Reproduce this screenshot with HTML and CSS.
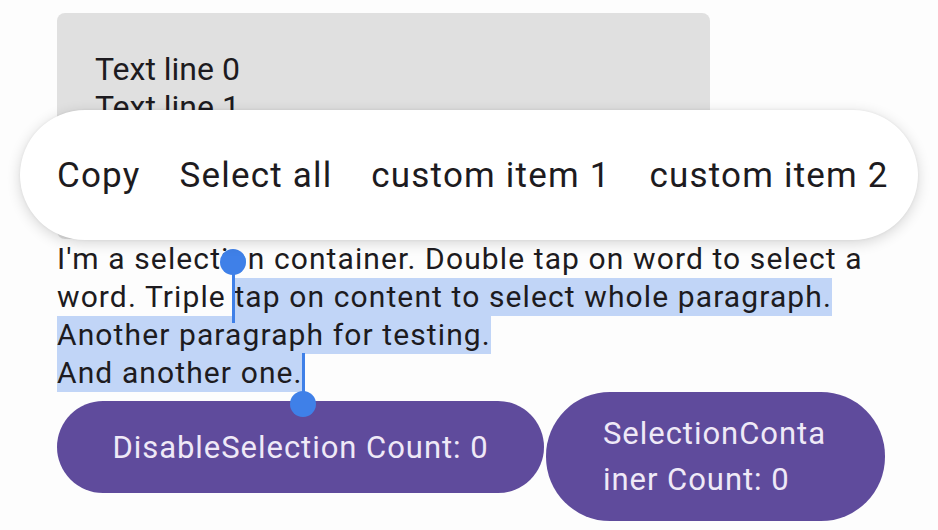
FILE: index.html
```html
<!DOCTYPE html>
<html>
<head>
<meta charset="utf-8">
<link rel="stylesheet" href="styles.css">
</head>
<body>
<div class="screen">
  <div class="card">
    <div class="card-line">Text line 0</div>
    <div class="card-line">Text line 1</div>
  </div>
  <div class="para">
    <div class="line">I'm a selection container. Double tap on word to select a</div>
    <div class="line">word. Triple <span class="sel">tap on content to select whole paragraph.</span></div>
    <div class="line"><span class="sel">Another paragraph for testing.</span></div>
    <div class="line"><span class="sel">And another one.</span></div>
    <div class="handle handle-start"><span class="knob"></span><span class="stem"></span></div>
    <div class="handle handle-end"><span class="stem"></span><span class="knob"></span></div>
  </div>
  <div class="buttons">
    <div class="btn btn-wide">DisableSelection Count: 0</div>
    <div class="btn btn-tall">SelectionConta<br>iner Count: 0</div>
  </div>
  <div class="toolbar">
    <span class="item">Copy</span>
    <span class="item">Select all</span>
    <span class="item">custom item 1</span>
    <span class="item">custom item 2</span>
  </div>
</div>
</body>
</html>
```
FILE: styles.css
```css
html, body {
  margin: 0;
  padding: 0;
  background: #fdfdfd;
}
body {
  width: 938px;
  height: 530px;
  overflow: hidden;
  font-family: Roboto, "Noto Sans", sans-serif;
  color: #1d1b20;
}
.screen {
  position: relative;
  width: 938px;
  height: 530px;
  padding: 13px 0 0 57px;
  box-sizing: border-box;
}
.card {
  width: 653px;
  height: 226px;
  box-sizing: border-box;
  background: #e0e0e0;
  border-radius: 8px;
  padding: 37px 38px 0;
  overflow: hidden;
}
.card-line {
  font-size: 32px;
  line-height: 38px;
}
.para {
  position: relative;
  margin-top: 1px;
  font-size: 30px;
  line-height: 38px;
  letter-spacing: 0.037em;
}
.line {
  white-space: nowrap;
  height: 38px;
}
.sel {
  display: inline-block;
  background: #c1d5f7;
  height: 38px;
}
.handle {
  position: absolute;
  display: flex;
  flex-direction: column;
  align-items: center;
  width: 26px;
}
.knob {
  width: 26px;
  height: 26px;
  border-radius: 50%;
  background: #3f80e8;
}
.stem {
  width: 3px;
  background: #3f80e8;
}
.handle-start {
  left: 163px;
  top: 9px;
}
.handle-start .knob {
  margin-bottom: -4px;
}
.handle-start .stem {
  height: 52px;
}
.handle-end {
  left: 233px;
  top: 113px;
}
.handle-end .stem {
  height: 42px;
  margin-bottom: -4px;
}
.buttons {
  display: flex;
  align-items: flex-start;
  gap: 2px;
}
.btn {
  background: #5f4b9c;
  color: #efe9f7;
  font-size: 31px;
  letter-spacing: 0.031em;
  box-sizing: border-box;
}
.btn-wide {
  width: 487px;
  height: 92px;
  margin-top: 9px;
  border-radius: 46px;
  display: flex;
  align-items: center;
  justify-content: center;
}
.btn-tall {
  width: 339px;
  height: 129px;
  border-radius: 64px;
  padding: 19px 30px 0 57px;
  line-height: 46px;
}
.toolbar {
  position: absolute;
  left: 20px;
  top: 110px;
  width: 898px;
  height: 130px;
  box-sizing: border-box;
  background: #ffffff;
  border-radius: 65px;
  box-shadow: 0 3px 14px rgba(0, 0, 0, 0.16), 0 0 3px rgba(0, 0, 0, 0.06);
  display: flex;
  align-items: center;
  gap: 39px;
  padding-left: 37px;
  font-size: 35px;
  letter-spacing: 0.034em;
  color: #1d1b20;
}
```
